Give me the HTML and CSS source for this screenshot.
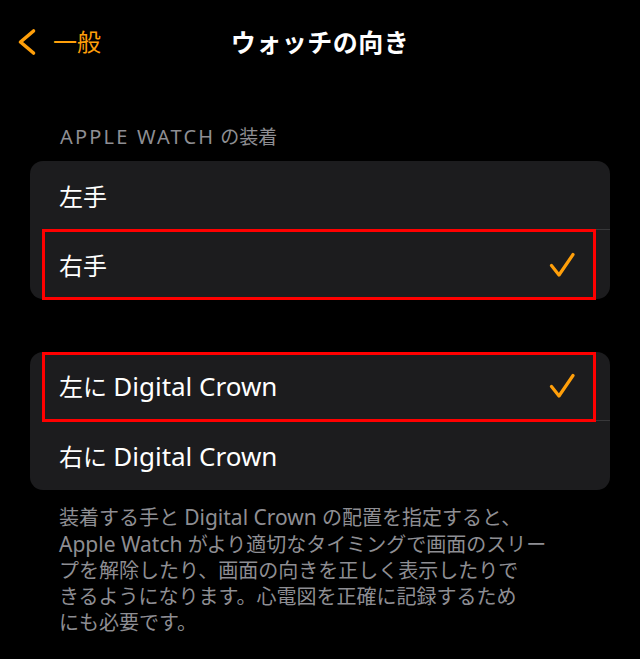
FILE: index.html
```html
<!DOCTYPE html>
<html lang="ja">
<head>
<meta charset="utf-8">
<link rel="stylesheet" href="styles.css">
</head>
<body>
<div class="screen">
  <header class="nav">
    <div class="back">
      <svg class="chev" width="20" height="28" viewBox="0 0 20 28"><path d="M16.5 3 L3.5 14 L16.5 25" fill="none" stroke="#ff9f0a" stroke-width="3.6" stroke-linecap="round" stroke-linejoin="round"/></svg>
      <span class="back-label">一般</span>
    </div>
    <div class="title">ウォッチの向き</div>
    <div class="spacer"></div>
  </header>

  <div class="section-header"><span class="lat">APPLE WATCH</span> の装着</div>
  <div class="card">
    <div class="row"><div class="row-inner"><span>左手</span></div></div>
    <div class="row highlight hl-a"><div class="row-inner"><span>右手</span>
      <svg class="check" width="26" height="26" viewBox="0 0 26 26"><path d="M2.5 13.5 L10 23 L24 2.5" fill="none" stroke="#ff9f0a" stroke-width="3.2" stroke-linecap="round" stroke-linejoin="round"/></svg>
    </div></div>
  </div>

  <div class="card card-2">
    <div class="row highlight hl-b"><div class="row-inner"><span>左に <span class="lat">Digital Crown</span></span>
      <svg class="check" width="26" height="26" viewBox="0 0 26 26"><path d="M2.5 13.5 L10 23 L24 2.5" fill="none" stroke="#ff9f0a" stroke-width="3.2" stroke-linecap="round" stroke-linejoin="round"/></svg>
    </div></div>
    <div class="row"><div class="row-inner"><span>右に <span class="lat">Digital Crown</span></span></div></div>
  </div>

  <p class="footer">装着する手と <span class="lat">Digital Crown</span> の配置を指定すると、<br><span class="lat">Apple Watch</span> がより適切なタイミングで画面のスリー<br>プを解除したり、画面の向きを正しく表示したりで<br>きるようになります。心電図を正確に記録するため<br>にも必要です。</p>
</div>
</body>
</html>
```

FILE: styles.css
```css
html, body {
  margin: 0;
  padding: 0;
  background: #000;
}
body {
  font-family: "Noto Sans", "Noto Sans CJK JP", sans-serif;
  color: #fff;
  width: 640px;
  height: 659px;
  overflow: hidden;
}
.screen {
  display: flex;
  flex-direction: column;
}
.nav {
  height: 84px;
  display: grid;
  grid-template-columns: 1fr auto 1fr;
  align-items: center;
}
.back {
  display: flex;
  align-items: center;
  padding-left: 17px;
  gap: 16px;
  color: #ff9f0a;
}
.chev {
  display: block;
}
.back-label {
  font-size: 24px;
  line-height: 30px;
}
.title {
  font-size: 25px;
  font-weight: 600;
  line-height: 30px;
  letter-spacing: 0.5px;
}
.section-header {
  margin-top: 41px;
  padding-left: 60px;
  font-size: 19px;
  line-height: 24px;
  color: #8e8e93;
}
.section-header .lat {
  font-size: 20px;
  letter-spacing: 2.2px;
}
.card {
  margin: 12px 30px 0;
  background: #1c1c1e;
  border-radius: 13px;
}
.card-2 {
  margin-top: 53px;
}
.row {
  position: relative;
  padding-left: 29px;
}
.row-inner {
  box-sizing: border-box;
  height: 69px;
  display: flex;
  align-items: center;
  justify-content: space-between;
  padding-right: 35px;
  font-size: 24px;
  border-bottom: 1px solid #38383a;
}
.row-inner .lat {
  font-size: 26px;
}
.row:last-child .row-inner {
  border-bottom: none;
}
.check {
  display: block;
}
.highlight::after {
  content: "";
  position: absolute;
  left: 12px;
  right: 14px;
  border: 3px solid #ff0000;
  pointer-events: none;
}
.hl-a::after {
  top: -1px;
  bottom: -1px;
}
.hl-b::after {
  top: 0;
  bottom: -1px;
}
.footer {
  margin: 14px 0 0;
  padding-left: 59px;
  font-size: 20px;
  line-height: 26px;
  color: #8e8e93;
}
.footer .lat {
  font-size: 21px;
}
```
